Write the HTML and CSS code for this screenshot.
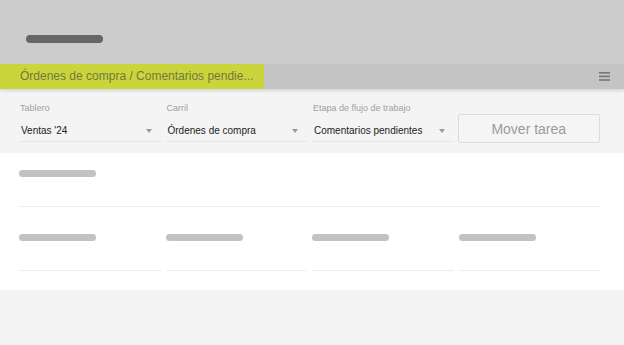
FILE: index.html
```html
<!DOCTYPE html>
<html lang="es">
<head>
<meta charset="utf-8">
<title>Mover tarea</title>
<link rel="stylesheet" href="styles.css">
</head>
<body>
  <div class="topbar"><span class="pill"></span></div>
  <div class="header">
    <div class="tab">Órdenes de compra / Comentarios pendie...</div>
    <svg class="menu" width="11" height="9" viewBox="0 0 11 9"><rect x="0" y="0" width="11" height="1.6" fill="#777"/><rect x="0" y="3.6" width="11" height="1.6" fill="#777"/><rect x="0" y="7.2" width="11" height="1.6" fill="#777"/></svg>
  </div>
  <div class="filters">
    <div class="field">
      <div class="label">Tablero</div>
      <div class="select"><span>Ventas '24</span><span class="arrow"></span></div>
    </div>
    <div class="field">
      <div class="label">Carril</div>
      <div class="select"><span>Órdenes de compra</span><span class="arrow"></span></div>
    </div>
    <div class="field">
      <div class="label">Etapa de flujo de trabajo</div>
      <div class="select"><span>Comentarios pendientes</span><span class="arrow"></span></div>
    </div>
    <button class="btn">Mover tarea</button>
  </div>
  <div class="content">
    <div class="row single">
      <div class="cell"><span class="bar"></span></div>
    </div>
    <div class="row grid">
      <div class="cell"><span class="bar"></span></div>
      <div class="cell"><span class="bar"></span></div>
      <div class="cell"><span class="bar"></span></div>
      <div class="cell"><span class="bar"></span></div>
    </div>
  </div>
</body>
</html>
```

FILE: styles.css
```css
html, body {
  margin: 0;
  padding: 0;
}
body {
  background: #f3f3f3;
  font-family: "Liberation Sans", Arial, sans-serif;
  width: 624px;
  height: 345px;
  overflow: hidden;
}
.topbar {
  height: 64px;
  background: #cccccc;
  box-sizing: border-box;
  padding: 35px 0 0 26px;
}
.pill {
  display: block;
  width: 77px;
  height: 8px;
  border-radius: 4px;
  background: #666666;
}
.header {
  height: 25px;
  background: #c4c4c4;
  display: flex;
  align-items: center;
  justify-content: space-between;
  position: relative;
  z-index: 1;
  box-shadow: 0 2px 3px rgba(0, 0, 0, 0.12);
}
.tab {
  width: 264px;
  height: 25px;
  box-sizing: border-box;
  padding: 0 0 0 20px;
  background: #c9d53b;
  color: #74783e;
  font-size: 12px;
  line-height: 25px;
  white-space: nowrap;
}
.menu {
  margin-right: 14px;
}
.filters {
  height: 64px;
  box-sizing: border-box;
  background: #f4f4f4;
  padding: 13px 24px 0 19px;
  display: grid;
  grid-template-columns: repeat(4, 1fr);
  column-gap: 5px;
  align-items: start;
}
.label {
  font-size: 9px;
  line-height: 13px;
  color: #a0a0a0;
  padding-left: 1px;
}
.select {
  height: 27px;
  box-sizing: border-box;
  padding: 5px 9px 0 2px;
  border-bottom: 1px solid #e6e6e6;
  display: flex;
  justify-content: space-between;
  align-items: flex-start;
  font-size: 10px;
  line-height: 21px;
  color: #222;
}
.arrow {
  width: 0;
  height: 0;
  margin-top: 9px;
  border-left: 3px solid transparent;
  border-right: 3px solid transparent;
  border-top: 4px solid #9a9a9a;
}
.btn {
  margin-top: 12px;
  margin-left: -1px;
  height: 29px;
  border: 1px solid #dcdcdc;
  border-radius: 2px;
  background: #f5f5f5;
  color: #979ca3;
  font-family: "Liberation Sans", Arial, sans-serif;
  font-size: 14px;
  padding: 0;
}
.content {
  background: #ffffff;
  height: 137px;
  box-sizing: border-box;
  padding: 0 24px 0 19px;
}
.row.grid {
  display: grid;
  grid-template-columns: repeat(4, 1fr);
  column-gap: 5px;
}
.row.single .cell {
  padding-top: 17px;
}
.row.grid .cell {
  padding-top: 27px;
}
.cell {
  border-bottom: 1px solid #eeeeee;
}
.bar {
  display: block;
  width: 77px;
  height: 7px;
  border-radius: 4px;
  background: #c2c2c2;
  margin-bottom: 29px;
}
```
